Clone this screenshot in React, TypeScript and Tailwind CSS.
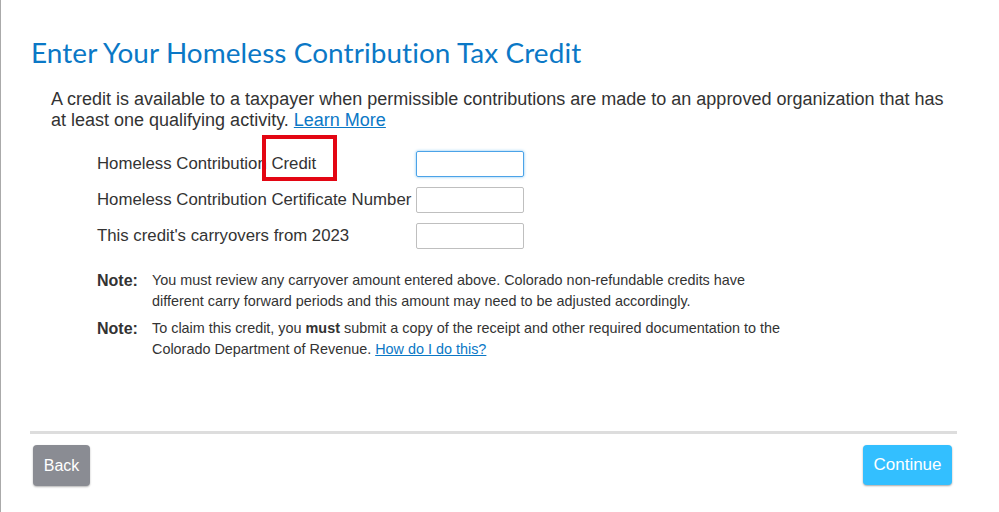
import React from "react";

export default function App() {
  return (
    <div className="relative w-[999px] h-[512px] bg-white border-l border-[#aaaaaa] font-['Liberation_Sans',Arial,sans-serif] text-[#333333] overflow-hidden">
      <div className="pl-[30px] pr-[42px] pt-[36px]">
        <h1 className="font-['Lato',sans-serif] text-[27.9px] leading-[32px] text-[#0b78c6] tracking-[0.1px]">
          Enter Your Homeless Contribution Tax Credit
        </h1>

        <p className="mt-[21px] ml-[20px] w-[900px] text-[18px] leading-[21px] text-[#333]">
          A credit is available to a taxpayer when permissible contributions are made to an approved organization that has
          at least one qualifying activity.{" "}
          <a href="#" className="text-[#0b78c6] underline">Learn More</a>
        </p>

        <div className="mt-[20px] ml-[66px] flex flex-col gap-[11px]">
          <div className="flex items-center h-[25px]">
            <span className="w-[319px] text-[16.8px]">Homeless Contribution Credit</span>
            <input className="w-[108px] h-[26px] border border-[#4ba3e8] rounded-[2px] shadow-[0_0_3px_#7cc0f0] outline-none" />
          </div>
          <div className="flex items-center h-[25px]">
            <span className="w-[319px] text-[16.8px] whitespace-nowrap">Homeless Contribution Certificate Number</span>
            <input className="w-[108px] h-[26px] border border-[#bfbfbf] rounded-[2px] outline-none" />
          </div>
          <div className="flex items-center h-[25px]">
            <span className="w-[319px] text-[16.8px]">This credit's carryovers from 2023</span>
            <input className="w-[108px] h-[26px] border border-[#bfbfbf] rounded-[2px] outline-none" />
          </div>
        </div>

        <div className="mt-[22px] ml-[66px] flex flex-col gap-[6px] text-[14.4px] leading-[21px]">
          <div className="flex">
            <span className="w-[55px] shrink-0 font-bold text-[16px]">Note:</span>
            <span className="w-[632px]">
              You must review any carryover amount entered above. Colorado non-refundable credits have different carry forward periods and this amount may need to be adjusted accordingly.
            </span>
          </div>
          <div className="flex">
            <span className="w-[55px] shrink-0 font-bold text-[16px]">Note:</span>
            <span className="w-[632px]">
              To claim this credit, you <b>must</b> submit a copy of the receipt and other required documentation to the Colorado Department of Revenue.{" "}
              <a href="#" className="text-[#0b78c6] underline">How do I do this?</a>
            </span>
          </div>
        </div>
      </div>

      <div className="absolute left-[29px] right-[42px] top-[431px]">
        <div className="h-[3px] bg-[#dddddd]" />
        <div className="mt-[11px] flex justify-between pl-[3px] pr-[5px]">
          <button className="w-[57px] h-[41px] rounded-[4px] bg-[#8a8c93] text-white text-[16px] shadow-[0_1px_2px_rgba(0,0,0,0.3)]">
            Back
          </button>
          <button className="w-[89px] h-[40px] rounded-[4px] bg-[#33bfff] text-white text-[17px] shadow-[0_1px_2px_rgba(0,0,0,0.35)]">
            Continue
          </button>
        </div>
      </div>

      <div className="absolute left-[261px] top-[135px] w-[75px] h-[46px] border-[4px] border-[#e30613]" />
    </div>
  );
}
